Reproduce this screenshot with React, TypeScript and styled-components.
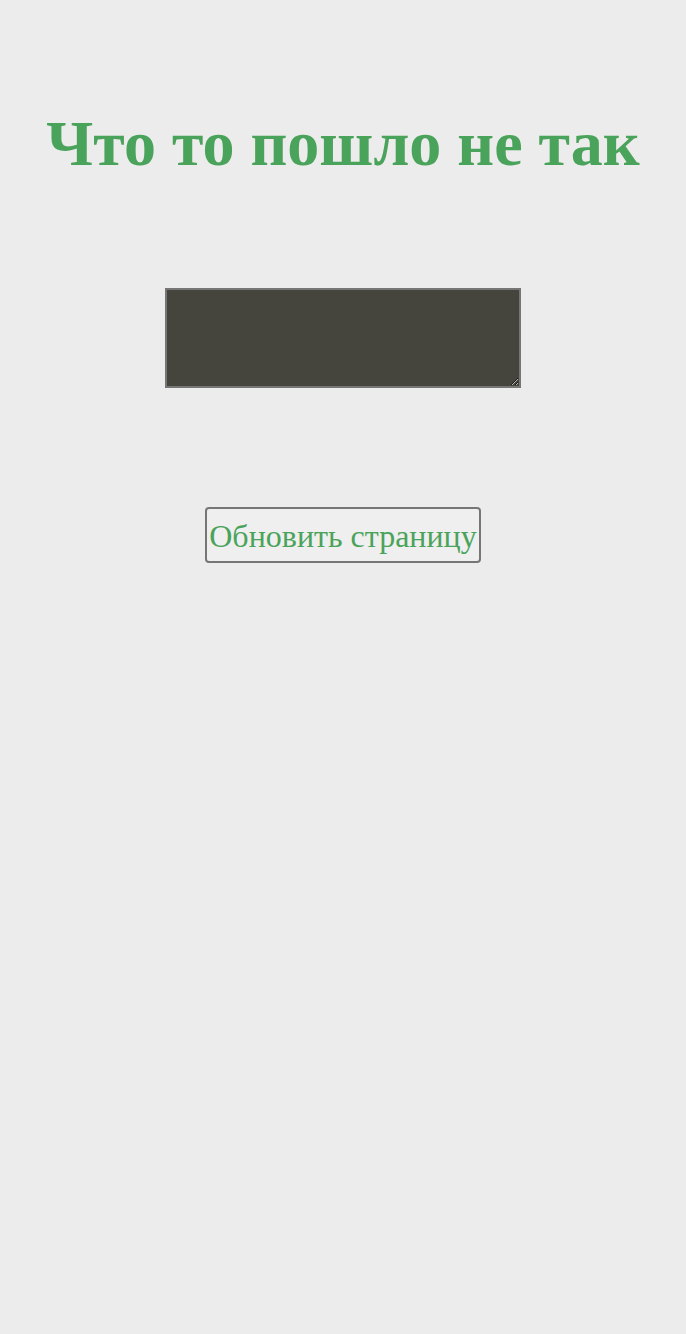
import styled, { createGlobalStyle } from 'styled-components';

const GlobalStyle = createGlobalStyle`
  html, body {
    margin: 0;
    padding: 0;
    background-color: #ececec;
  }
  body {
    font-family: "Liberation Serif", "Times New Roman", serif;
  }
`;

const Page = styled.div`
  display: flex;
  flex-direction: column;
  align-items: center;
  min-height: 1334px;
  padding-top: 107px;
  box-sizing: border-box;
`;

const Title = styled.h1`
  margin: 0;
  font-size: 64px;
  line-height: 1.15;
  font-weight: bold;
  color: #4aa35a;
  text-align: center;
`;

const ErrorBox = styled.textarea`
  margin-top: 107px;
  width: 356px;
  height: 100px;
  box-sizing: border-box;
  border: 2px solid #767676;
  background-color: #45453d;
  color: #ececec;
  padding: 2px;
  font-family: "Liberation Mono", monospace;
  font-size: 13px;
`;

const ReloadButton = styled.button`
  margin-top: 119px;
  height: 56px;
  box-sizing: border-box;
  padding: 3px 2px 0;
  border: 2px solid #767676;
  border-radius: 4px;
  background-color: #efefef;
  color: #4aa35a;
  font-family: "Liberation Serif", "Times New Roman", serif;
  font-size: 32px;
  cursor: pointer;
`;

function App() {
  return (
    <>
      <GlobalStyle />
      <Page>
        <Title>Что то пошло не так</Title>
        <ErrorBox readOnly />
        <ReloadButton onClick={() => window.location.reload()}>
          Обновить страницу
        </ReloadButton>
      </Page>
    </>
  );
}

export default App;
